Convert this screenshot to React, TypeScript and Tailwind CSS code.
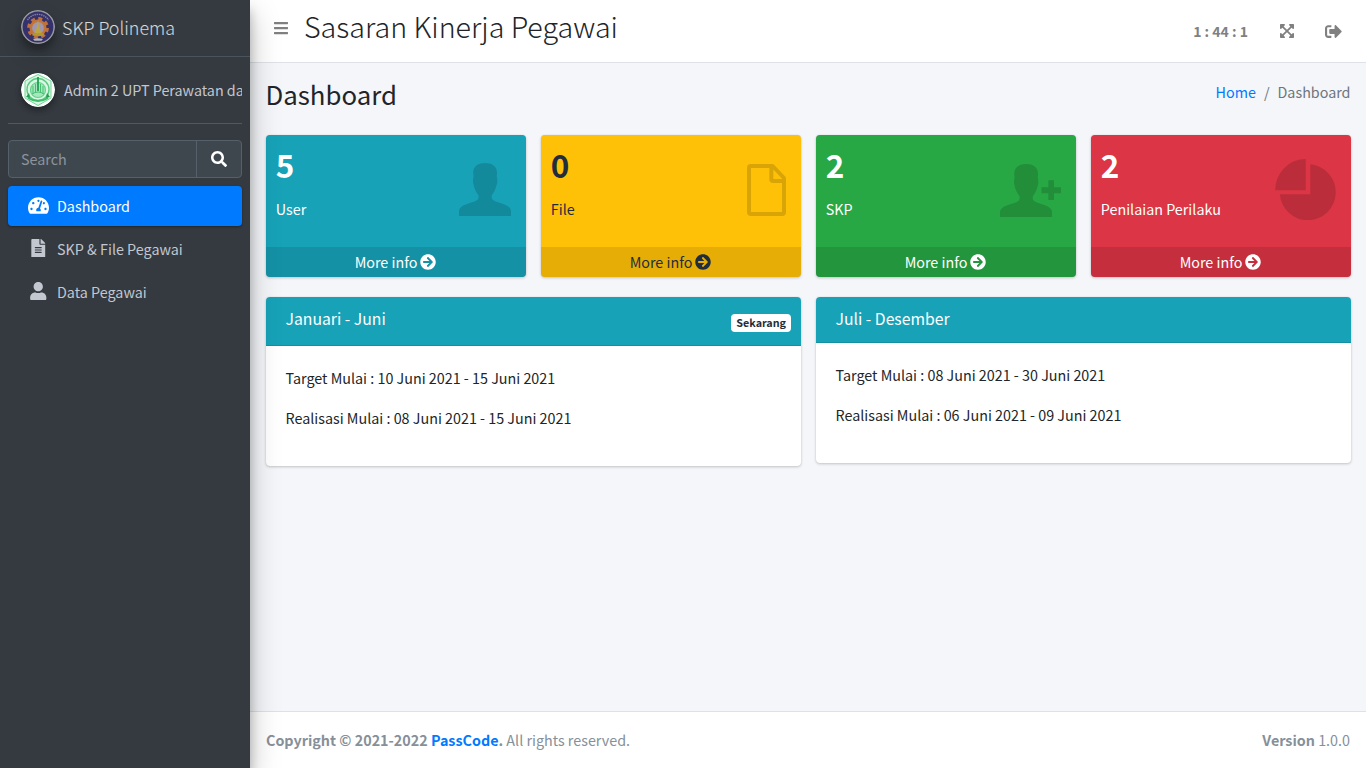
import type { ReactNode } from 'react';
import {
  FaArrowCircleRight,
  FaBars,
  FaExpandArrowsAlt,
  FaFileAlt,
  FaSearch,
  FaSignOutAlt,
  FaTachometerAlt,
  FaUser,
} from 'react-icons/fa';

const PERSON =
  'M0 160V146C0 134 12 128 26 123C46 116 59 114 59 104V97C51 88 46 76 44 65C41 58 42 50 44 39C38 12 56 0 79 0C102 0 119 12 114 39C116 50 117 58 114 65C111 78 106 89 99 97V104C99 114 112 116 132 123C146 128 157 134 157 146V160Z';

function PersonIcon() {
  return (
    <svg viewBox="0 0 157 160" className="mb-[2px] h-[53px] w-[52px]" fill="currentColor">
      <path d={PERSON} />
    </svg>
  );
}

function DocumentIcon() {
  return (
    <svg viewBox="0 0 117 156" className="h-[52px] w-[39px]" fill="none" stroke="currentColor" strokeWidth="12" strokeLinejoin="round">
      <path d="M6 11Q6 6 11 6H77L111 42V145Q111 150 106 150H11Q6 150 6 145ZM73 8V46Q73 51 78 51H109" />
    </svg>
  );
}

function PersonAddIcon() {
  return (
    <svg viewBox="0 0 184 160" className="h-[53px] w-[61px]" fill="currentColor">
      <path d={PERSON} />
      <path d="M146 49H163V70H184V88H163V109H146V88H125V70H146Z" />
    </svg>
  );
}

function PieIcon() {
  return (
    <svg viewBox="0 0 183 184" className="mb-[2px] h-[61px] w-[61px]" fill="currentColor">
      <path d="M92 0V94H0A92 94 0 0 1 92 0Z" />
      <path d="M106 16A84.5 84.5 0 1 1 14 106H106Z" />
    </svg>
  );
}

function BrandLogo() {
  return (
    <svg viewBox="0 0 34 34" className="h-[34px] w-[34px] shrink-0 rounded-full shadow-[0_10px_20px_rgba(0,0,0,.19),0_6px_6px_rgba(0,0,0,.23)]">
      <circle cx="17" cy="17" r="16.2" fill="#35326b" stroke="#98999f" strokeWidth="1.6" />
      <path d="M6.5 10A12.6 12.6 0 0 1 27.5 10" fill="none" stroke="#8583a0" strokeWidth="1.4" strokeDasharray="1.4 .8" />
      <circle cx="17" cy="18" r="9.4" fill="none" stroke="#c0703a" strokeWidth="3" strokeDasharray="4 3.38" />
      <circle cx="17" cy="18" r="7.2" fill="#a096b0" stroke="#c2733a" strokeWidth="2.6" />
      <path d="M17 9.5L18.3 18L20.5 23H13.5L15.7 18Z" fill="#bfa540" />
      <path d="M11.5 24.5H22.5" stroke="#b3982f" strokeWidth="2.4" />
      <path d="M12 29Q17 27.6 22 29L20.5 30.8H13.5Z" fill="#b4b4ba" />
    </svg>
  );
}

function UserLogo() {
  return (
    <svg viewBox="0 0 34 34" className="h-[34px] w-[34px] shrink-0 rounded-full shadow-[0_3px_6px_rgba(0,0,0,.16),0_3px_6px_rgba(0,0,0,.23)]">
      <circle cx="17" cy="17" r="17" fill="#fafffb" />
      <path d="M17 1.5L30 8V25L17 32.5L4 25V8Z" fill="#d9f6e2" stroke="#76d499" strokeWidth="1" />
      <circle cx="17" cy="16.5" r="11" fill="none" stroke="#5bcb83" strokeWidth="1.4" />
      <circle cx="17" cy="17" r="7.5" fill="#a4e8bb" stroke="#65d18b" strokeWidth="1.2" />
      <path d="M17 4V18" stroke="#20a052" strokeWidth="1.8" />
      <path d="M12 13V21M14.5 11V20M19.5 11V20M22 13V21M11 21Q17 17 23 21" stroke="#48bf72" fill="none" />
      <path d="M7 25Q17 31 27 25" stroke="#3dbd6b" strokeWidth="2" fill="none" />
      <path d="M5 24L8 20L9 25ZM29 24L26 20L25 25Z" fill="#229c50" />
    </svg>
  );
}

function NavItem({ icon, label, active }: { icon: ReactNode; label: string; active?: boolean }) {
  return (
    <a
      className={
        active
          ? 'flex h-10 items-center rounded bg-[#007bff] pl-4 text-white shadow-[0_1px_3px_rgba(0,0,0,.12),0_1px_2px_rgba(0,0,0,.24)]'
          : 'flex h-10 items-center rounded pl-4 text-[#c2c7d0]'
      }
    >
      <span className="mr-1 mb-[2px] flex w-7 justify-center text-[18.5px]">{icon}</span>
      <span className="pl-px">{label}</span>
    </a>
  );
}

function StatBox({ tone, value, label, icon }: { tone: string; value: string; label: string; icon: ReactNode }) {
  return (
    <div className={`flex h-[142px] flex-col overflow-hidden rounded shadow-[0_0_1px_rgba(0,0,0,.125),0_1px_3px_rgba(0,0,0,.2)] ${tone}`}>
      <div className="flex flex-1 justify-between pr-[15.4px] pl-[9.8px]">
        <div className="pt-[9px]">
          <div className="h-[42px] text-[31.5px] leading-[41px] font-bold">{value}</div>
          <div className="mt-[11px]">{label}</div>
        </div>
        <div className="flex h-[110px] items-center text-black/15">{icon}</div>
      </div>
      <a className="flex h-[30px] items-center justify-center gap-[3px] bg-black/10 pr-px">
        More info <FaArrowCircleRight className="text-[16px]" />
      </a>
    </div>
  );
}

function PeriodCard({ title, badge, lines }: { title: string; badge?: string; lines: string[] }) {
  return (
    <section className="overflow-hidden rounded bg-white shadow-[0_0_1px_rgba(0,0,0,.125),0_1px_3px_rgba(0,0,0,.2)]">
      <header
        className={
          badge
            ? 'flex h-[49px] justify-between border-b border-[#158fa2] bg-[#17a2b8] pt-[11px] pr-[10px] pl-[19.5px] text-white'
            : 'flex h-[46px] justify-between border-b border-[#158fa2] bg-[#17a2b8] pt-[11px] pr-[10px] pl-[19.5px] text-white'
        }
      >
        <h3 className="text-[15.76px] leading-[21px]">{title}</h3>
        {badge && (
          <span className="mt-[6px] h-[18px] rounded bg-white px-[5px] text-[10.75px] leading-[17px] font-bold text-[#1f2d3d]">
            {badge}
          </span>
        )}
      </header>
      <div className="flex h-[120px] flex-col gap-4 px-[19.5px] pt-5">
        {lines.map((line) => (
          <p key={line}>{line}</p>
        ))}
      </div>
    </section>
  );
}

export default function App() {
  return (
    <div className="flex h-screen overflow-hidden bg-[#f4f6f9] font-['Source_Sans_Pro','Noto_Sans_CJK_JP',sans-serif] text-[14.33px] leading-6 text-[#212529]">
      <aside className="relative z-10 flex w-[250px] shrink-0 flex-col bg-[#343a40] shadow-[0_14px_28px_rgba(0,0,0,.25),0_10px_10px_rgba(0,0,0,.22)]">
        <div className="flex h-[57px] items-center border-b border-[#4b545c] pb-[3px] pl-[21px]">
          <BrandLogo />
          <span className="ml-[7px] text-[17.9px] font-light text-white/80">SKP Polinema</span>
        </div>
        <div className="flex flex-col px-2">
          <div className="flex h-[67px] items-center overflow-hidden border-b border-[#4f5962] pl-[13px] text-[#c2c7d0]">
            <UserLogo />
            <span className="ml-[9px] whitespace-nowrap">Admin 2 UPT Perawatan dan</span>
          </div>
          <div className="mt-4 flex h-[38px] overflow-hidden rounded border border-[#56606a] bg-[#3f474e]">
            <div className="flex flex-1 items-center pl-3 text-[#8d949b]">Search</div>
            <button className="flex w-[45px] items-center justify-center border-l border-[#56606a] text-white">
              <FaSearch className="text-[16px]" />
            </button>
          </div>
          <nav className="mt-2 flex flex-col gap-[3px]">
            <NavItem active icon={<FaTachometerAlt className="h-[19px] w-[21px]" />} label="Dashboard" />
            <NavItem icon={<FaFileAlt />} label="SKP & File Pegawai" />
            <NavItem icon={<FaUser />} label="Data Pegawai" />
          </nav>
        </div>
      </aside>

      <div className="flex min-w-0 flex-1 flex-col">
        <header className="flex h-[63px] shrink-0 items-center border-b border-[#dee2e6] bg-white pr-6 pl-[23px] text-[#808080]">
          <FaBars className="mb-[6px] text-[16px]" />
          <h1 className="mb-[10px] ml-[15px] text-[28.65px] leading-[38px] font-light text-[#212529]">Sasaran Kinerja Pegawai</h1>
          <div className="ml-auto flex items-center">
            <span className="text-[14px] font-bold">1 : 44 : 1</span>
            <FaExpandArrowsAlt className="ml-[31px] text-[16px]" />
            <FaSignOutAlt className="ml-[30px] text-[17px]" />
          </div>
        </header>

        <main className="flex-1 pr-[15px] pl-4">
          <div className="flex justify-between pt-[13px]">
            <h2 className="-ml-[.5px] text-[25.8px] leading-[35px]">Dashboard</h2>
            <div className="flex gap-2 pt-1 pr-[.5px] text-[#6c757d]">
              <a className="text-[#007bff]">Home</a>
              <span>/</span>
              <span>Dashboard</span>
            </div>
          </div>
          <div className="mt-6 grid grid-cols-4 gap-[15px]">
            <StatBox tone="bg-[#17a2b8] text-white" value="5" label="User" icon={<PersonIcon />} />
            <StatBox tone="bg-[#ffc107] text-[#1f2d3d]" value="0" label="File" icon={<DocumentIcon />} />
            <StatBox tone="bg-[#28a745] text-white" value="2" label="SKP" icon={<PersonAddIcon />} />
            <StatBox tone="bg-[#dc3545] text-white" value="2" label="Penilaian Perilaku" icon={<PieIcon />} />
          </div>
          <div className="mt-5 grid grid-cols-2 items-start gap-[15px]">
            <PeriodCard
              title="Januari - Juni"
              badge="Sekarang"
              lines={['Target Mulai : 10 Juni 2021 - 15 Juni 2021', 'Realisasi Mulai : 08 Juni 2021 - 15 Juni 2021']}
            />
            <PeriodCard
              title="Juli - Desember"
              lines={['Target Mulai : 08 Juni 2021 - 30 Juni 2021', 'Realisasi Mulai : 06 Juni 2021 - 09 Juni 2021']}
            />
          </div>
        </main>

        <footer className="flex h-[57px] shrink-0 items-center justify-between border-t border-[#dee2e6] bg-white pr-4 pl-4 text-[#869099]">
          <div>
            <strong className="font-bold">
              Copyright © 2021-2022 <a className="text-[#007bff]">PassCode</a>.
            </strong>{' '}
            All rights reserved.
          </div>
          <div>
            <b className="font-bold">Version</b> 1.0.0
          </div>
        </footer>
      </div>
    </div>
  );
}
